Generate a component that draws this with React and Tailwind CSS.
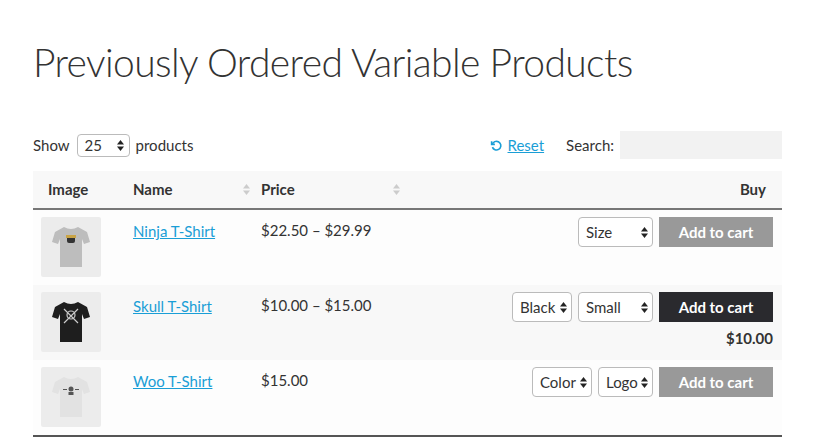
import React from "react";

const F = { fontFamily: 'Lato,"Open Sans",sans-serif' };

function Arrows({ className = "" }) {
  return (
    <svg width="7" height="11" viewBox="0 0 7 11" className={className}>
      <path d="M3.5 0L7 4.5H0z" fill="currentColor" />
      <path d="M3.5 11L7 6.5H0z" fill="currentColor" />
    </svg>
  );
}

function Select({ label, w }) {
  return (
    <div className={`h-[30px] ${w} border border-[#bbb] rounded-[4px] bg-white flex items-center justify-between pl-[7px] pr-[4px] text-[15px] text-[#333]`}>
      <span>{label}</span>
      <Arrows className="text-[#222]" />
    </div>
  );
}

function Shirt({ color, mark }) {
  return (
    <div className="w-[60px] h-[60px] bg-[#ececec] rounded-[2px] flex items-center justify-center">
      <svg width="40" height="46" viewBox="0 0 40 46">
        <path d="M13 3 L4 8 L1 18 L7 20 L9 15 L9 43 L31 43 L31 15 L33 20 L39 18 L36 8 L27 3 Q20 7 13 3Z" fill={color} />
        {mark === "ninja" && <rect x="16" y="12" width="8" height="7" rx="2" fill="#333" />}
        {mark === "ninja" && <rect x="15" y="11" width="10" height="3" fill="#c9a447" />}
        {mark === "skull" && (
          <g stroke="#ccc" strokeWidth="1.2" fill="none">
            <circle cx="20" cy="16" r="4" />
            <path d="M13 10 L27 24 M27 10 L13 24" />
          </g>
        )}
        {mark === "woo" && (
          <g fill="#555">
            <circle cx="20" cy="15" r="2.5" />
            <rect x="17.5" y="18" width="5" height="3" />
            <rect x="12" y="15" width="4" height="1" />
            <rect x="24" y="15" width="4" height="1" />
          </g>
        )}
      </svg>
    </div>
  );
}

function Row({ bg, name, price, shirt, mark, selects, dark, extra }) {
  return (
    <div className={`flex h-[75px] ${bg}`}>
      <div className="w-[100px] pl-[8px] pt-[7px]"><Shirt color={shirt} mark={mark} /></div>
      <div className="w-[128px] pt-[9px]"><a className="text-[#1a9ed6] underline text-[15px]">{name}</a></div>
      <div className="w-[150px] pt-[9px] text-[15px] text-[#333]">{price}</div>
      <div className="flex-1 flex flex-col items-end pr-[9px] pt-[7px]">
        <div className="flex gap-[6px]">
          {selects.map(([l, w]) => <Select key={l} label={l} w={w} />)}
          <div className={`h-[30px] w-[114px] flex items-center justify-center text-white font-bold text-[15px] ${dark ? "bg-[#2a2a2e]" : "bg-[#999]"}`}>Add to cart</div>
        </div>
        {extra && <div className="mt-[5px] font-bold text-[15px] text-[#333]">{extra}</div>}
      </div>
    </div>
  );
}

export default function App() {
  return (
    <div style={F} className="w-[820px] h-[439px] bg-white overflow-hidden">
      <div className="ml-[33px] w-[749px]">
        <h1 className="pt-[38px] text-[39px] font-light text-[#333] leading-[48px] tracking-[-0.6px]">Previously Ordered Variable Products</h1>
        <div className="mt-[45px] flex items-center h-[28px] text-[15px] text-[#333]">
          <span>Show</span>
          <div className="ml-[7px] w-[53px] h-[23px] border border-[#bbb] rounded-[4px] flex items-center justify-between pl-[7px] pr-[5px]">
            <span>25</span><Arrows className="text-[#222]" />
          </div>
          <span className="ml-[6px]">products</span>
          <div className="flex-1" />
          <span className="text-[#1a9ed6] mr-[5px]">
            <svg width="13" height="13" viewBox="0 0 24 24" fill="none" stroke="currentColor" strokeWidth="3"><path d="M3 4v6h6" /><path d="M4.5 15A8 8 0 1 0 6 7L3 10" /></svg>
          </span>
          <a className="text-[#1a9ed6] underline">Reset</a>
          <span className="ml-[22px] mr-[6px]">Search:</span>
          <div className="w-[162px] h-[28px] bg-[#f2f2f2]" />
        </div>
        <div className="mt-[12px] flex h-[39px] items-center bg-[#f8f8f8] border-b-2 border-[#777] font-bold text-[15px] text-[#333]">
          <div className="w-[100px] pl-[15px]">Image</div>
          <div className="w-[128px] flex items-center justify-between pr-[11px]"><span>Name</span><Arrows className="text-[#ccc]" /></div>
          <div className="w-[150px] flex items-center justify-between pr-[11px]"><span>Price</span><Arrows className="text-[#ccc]" /></div>
          <div className="flex-1 text-right pr-[16px]">Buy</div>
        </div>
        <Row bg="bg-[#fdfdfd]" name="Ninja T-Shirt" price="$22.50 – $29.99" shirt="#bdbdbd" mark="ninja" selects={[["Size", "w-[75px]"]]} />
        <Row bg="bg-[#f8f8f8]" name="Skull T-Shirt" price="$10.00 – $15.00" shirt="#1e1e1e" mark="skull" selects={[["Black", "w-[60px]"], ["Small", "w-[75px]"]]} dark extra="$10.00" />
        <Row bg="bg-[#fdfdfd]" name="Woo T-Shirt" price="$15.00" shirt="#e2e2e2" mark="woo" selects={[["Color", "w-[60px]"], ["Logo", "w-[55px]"]]} />
        <div className="border-t-2 border-[#555]" />
      </div>
    </div>
  );
}
